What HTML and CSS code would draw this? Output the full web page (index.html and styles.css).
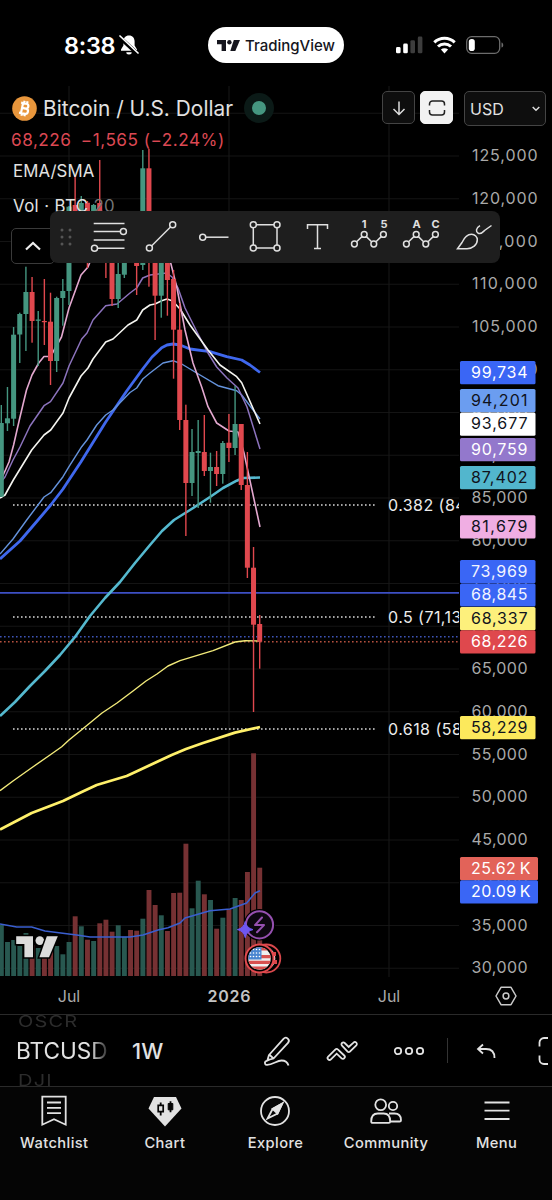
FILE: index.html
```html
<!DOCTYPE html>
<html lang="en">
<head>
    <meta charset="UTF-8">
    <meta name="viewport" content="width=device-width, initial-scale=1.0">
    <title>BTCUSD Chart</title>
    <link rel="stylesheet" href="styles.css">
</head>
<body>
    <!-- Status bar -->
    <header class="status-bar">
        <div class="clock">
            <span>8:38</span>
            <svg width="20" height="22" viewBox="0 0 20 22">
                <path d="M10 1.5c-3.6 0-5.6 2.6-5.6 6v4L2 15.5v1.3h16v-1.3l-2.4-4v-4c0-3.4-2-6-5.6-6z" fill="#fff"/>
                <path d="M7.3 18.2h5.4a2.7 2.2 0 0 1-5.4 0z" fill="#fff"/>
                <path d="M0 2.8l18.5 17" stroke="#000" stroke-width="4"/>
                <path d="M1 2l18 17" stroke="#fff" stroke-width="1.7" stroke-linecap="round"/>
            </svg>
        </div>
        <div class="brand">
            <svg width="23" height="11" viewBox="0 0 23 11" fill="#15151d">
                <path d="M0 0h9v11H4.6V4.3H0z"/>
                <circle cx="12.4" cy="2.2" r="2.2"/>
                <path d="M16.8 0H23l-4.7 11h-5z"/>
            </svg>
            <span>TradingView</span>
        </div>
        <div class="indicators">
            <svg width="27" height="18" viewBox="0 0 27 18">
                <rect x="0" y="11" width="4.6" height="6.3" rx="1.4" fill="#fff"/>
                <rect x="7.2" y="7.6" width="4.6" height="9.7" rx="1.4" fill="#fff"/>
                <rect x="14.4" y="4.2" width="4.6" height="13.1" rx="1.4" fill="#3d3d3d"/>
                <rect x="21.8" y="0.6" width="4.6" height="16.7" rx="1.4" fill="#3d3d3d"/>
            </svg>
            <svg width="23" height="18" viewBox="0 0 23 18" fill="none" stroke="#fff" stroke-width="3">
                <path d="M1.3 6.4a14.6 14.6 0 0 1 20.4 0"/>
                <path d="M5 10.5a9.4 9.4 0 0 1 13 0"/>
                <path d="M11.5 17.4l-3.6-3.8a5.3 5.3 0 0 1 7.2 0z" fill="#fff" stroke="none"/>
            </svg>
            <svg width="38" height="18" viewBox="0 0 38 18">
                <rect x="0.7" y="0.7" width="33" height="16.6" rx="5" fill="none" stroke="#6c6c6c" stroke-width="1.3"/>
                <rect x="2.8" y="3" width="6" height="12" rx="2.8" fill="#fff"/>
                <path d="M35.5 6.4c2.3.5 2.3 4.7 0 5.2z" fill="#6c6c6c"/>
            </svg>
        </div>
    </header>

    <!-- Chart -->
    <main class="chart">
        <svg id="plot" class="plot" width="552" height="928" viewBox="0 86 552 928">
            <defs>
                <clipPath id="pane"><rect x="0" y="86" width="459" height="891"/></clipPath>
                <clipPath id="flag"><circle cx="259.5" cy="958.5" r="11.2"/></clipPath>
            </defs>
            <g id="grid" clip-path="url(#pane)"></g>
            <g id="volume" clip-path="url(#pane)"></g>
            <g id="levels" clip-path="url(#pane)"></g>
            <g id="averages" clip-path="url(#pane)"></g>
            <g id="candles" clip-path="url(#pane)"></g>
            <g id="axis"></g>

            <!-- watermark -->
            <g fill="#dcdcdc" stroke="#000" stroke-width="3" paint-order="stroke">
                <path d="M16.2 936.2H33v21h-8.6v-13.3h-8.2z"/>
                <circle cx="39.8" cy="940.6" r="4.3"/>
                <path d="M46.8 936.2h11L49 957.2h-9.6z"/>
            </g>

            <!-- event badges -->
            <circle cx="259.5" cy="924.8" r="15.8" fill="#000"/>
            <circle cx="259.5" cy="924.8" r="13.6" fill="#0c0710" stroke="#9550b0" stroke-width="2"/>
            <path d="M262 917.5l-7 7.6h9l-7 7.2" fill="none" stroke="#9550b0" stroke-width="2" stroke-linejoin="round" stroke-linecap="round"/>
            <path d="M245.2 921.5Q246.6 928.2 253 929.6Q246.6 931 245.2 937.7Q243.8 931 237.4 929.6Q243.8 928.2 245.2 921.5z" fill="#6f57f2" stroke="#6f57f2" stroke-width="1" stroke-linejoin="round"/>
            <circle cx="266.3" cy="958.5" r="14" fill="#000" stroke="#d9484c" stroke-width="1.8"/>
            <circle cx="263.3" cy="958.5" r="12" fill="#e8e8e8"/>
            <path d="M270 952h6v4h-4zM270 960h7v4h-7z" fill="#d9484c"/>
            <circle cx="259.5" cy="958.5" r="14" fill="#000" stroke="#e2494e" stroke-width="2"/>
            <g clip-path="url(#flag)">
                <rect x="247" y="946" width="25" height="25" fill="#efefef"/>
                <path d="M247 949h25M247 956.6h25M247 962.3h25M247 968.2h25" stroke="#d8514f" stroke-width="3.2"/>
                <rect x="247" y="946" width="14.5" height="13.5" fill="#4a86d0"/>
                <g fill="#fff" id="stars"></g>
            </g>

            <!-- axis settings -->
            <path d="M501 987.3h10l5 8.7-5 8.7h-10l-5-8.7z" fill="none" stroke="#c9c9c9" stroke-width="1.5" stroke-linejoin="round"/>
            <circle cx="506" cy="996" r="2.9" fill="none" stroke="#c9c9c9" stroke-width="1.5"/>
        </svg>

        <!-- Legend -->
        <div class="legend">
            <div class="symbol-row">
                <svg width="25" height="25" viewBox="0 0 25 25">
                    <circle cx="12.5" cy="12.5" r="12.3" fill="#e8963c"/>
                    <g fill="none" stroke="#fff" stroke-width="2.2" transform="rotate(12 12.5 12.5)">
                        <path d="M8 7.5h5.4a2.4 2.4 0 0 1 0 4.9H10h3.9a2.6 2.6 0 0 1 0 5.2H8M10 7.5v10M11 4.8v2.5M14 4.8v2.5M11 17.5v2.7M14 17.5v2.7"/>
                    </g>
                </svg>
                <h1>Bitcoin / U.S. Dollar</h1>
                <span class="market-open"></span>
            </div>
            <div class="change">68,226 <span>−1,565 (−2.24%)</span></div>
            <div class="study">EMA/SMA</div>
            <div class="study vol">Vol · BTC <span>20</span></div>
            <button class="collapse" aria-label="Collapse legend">
                <svg width="18" height="12" viewBox="0 0 18 12"><path d="M2 9.5l7-6.5 7 6.5" fill="none" stroke="#eee" stroke-width="2.2"/></svg>
            </button>
        </div>

        <div class="chart-buttons">
            <button class="square" aria-label="Scroll down">
                <svg width="20" height="20" viewBox="0 0 20 20"><path d="M10 3.5v13M4.5 11l5.5 5.5 5.5-5.5" fill="none" stroke="#ddd" stroke-width="1.5"/></svg>
            </button>
            <button class="square light" aria-label="Fullscreen">
                <svg width="18" height="18" viewBox="0 0 18 18"><path d="M1.5 6.5V5a3 3 0 0 1 3-3h9a3 3 0 0 1 3 3v1.5M1.5 11V13a3 3 0 0 0 3 3h9a3 3 0 0 0 3-3V11" fill="none" stroke="#222" stroke-width="1.5"/></svg>
            </button>
            <button class="currency">
                <span>USD</span>
                <svg width="8" height="6" viewBox="0 0 8 6"><path d="M0.7 1l3.3 3.2L7.3 1" fill="none" stroke="#ddd" stroke-width="1.5"/></svg>
            </button>
        </div>

        <!-- Drawing tools -->
        <div class="drawing-tools">
            <svg class="grip" width="12" height="18" viewBox="0 0 12 18" fill="#555">
                <circle cx="2" cy="2" r="1.5"/><circle cx="10" cy="2" r="1.5"/>
                <circle cx="2" cy="9" r="1.5"/><circle cx="10" cy="9" r="1.5"/>
                <circle cx="2" cy="16" r="1.5"/><circle cx="10" cy="16" r="1.5"/>
            </svg>
            <svg class="tool" viewBox="-18 -18 36 36"><path d="M-15.3-13.5H15.5M-15.3-5.4H11.2M-15.3 3H15.5M-11 11.2H15.5"/><circle cx="14.4" cy="-5.4" r="3"/><circle cx="-14.5" cy="11.2" r="3"/></svg>
            <svg class="tool" viewBox="-18 -18 36 36"><path d="M-9.5 9l19-19"/><circle cx="-11.6" cy="11" r="3"/><circle cx="11.7" cy="-12.3" r="3"/></svg>
            <svg class="tool" viewBox="-18 -18 36 36"><path d="M-7.2 0.2H15.5"/><circle cx="-10.3" cy="0.2" r="3"/></svg>
            <svg class="tool" viewBox="-18 -18 36 36"><path d="M-8.7-12.3H9M-8.7 11H9M-11.7-9.3V8M12-9.3V8"/><circle cx="-11.7" cy="-12.3" r="3"/><circle cx="12" cy="-12.3" r="3"/><circle cx="-11.7" cy="11" r="3"/><circle cx="12" cy="11" r="3"/></svg>
            <svg class="tool" viewBox="-18 -18 36 36"><path d="M-9.5-8v-4.3H10.5V-8M0.5-12.3V11.5M-3 11.5h7"/></svg>
            <svg class="tool" viewBox="-18 -18 36 36"><path d="M-12.4 4.8l5.3-5.2M-2.6-0.4l5.2 5.2M7 4.8l5.2-5.2"/><circle cx="-14.6" cy="7" r="2.9"/><circle cx="-4.8" cy="-2.6" r="2.9"/><circle cx="4.8" cy="7" r="2.9"/><circle cx="14.4" cy="-2.6" r="2.9"/><text x="-5" y="-9.5">1</text><text x="15" y="-9.5">5</text></svg>
            <svg class="tool" viewBox="-18 -18 36 36"><path d="M-12.4 4.8l5.3-5.2M-2.6-0.4l5.2 5.2M7 4.8l5.2-5.2"/><circle cx="-14.6" cy="7" r="2.9"/><circle cx="-4.8" cy="-2.6" r="2.9"/><circle cx="4.8" cy="7" r="2.9"/><circle cx="14.4" cy="-2.6" r="2.9"/><text x="-4.5" y="-9.5">A</text><text x="14.5" y="-9.5">C</text></svg>
            <svg class="tool" viewBox="-18 -18 36 36"><path d="M-15.5 11.7L-11 5.5C-8.5 0-5-2.8-1.5-2.8C2-2.8 4.3 0 4.3 2.8C4.3 8-0.5 11.7-6 11.7zM7-11.3C2.7-8.8 2.5-5.5 5.3-3.7C8-2.5 9.5-4.5 11.5-6.5L18.5-11.5"/></svg>
        </div>
    </main>

    <!-- Chart toolbar -->
    <div class="toolbar">
        <div class="symbol-wheel">
            <span class="ghost">OSCR</span>
            <span class="current">BTCUSD</span>
            <span class="ghost">DJI</span>
        </div>
        <span class="interval">1W</span>
        <div class="toolbar-icons">
            <svg width="30" height="32" viewBox="0 0 30 32"><path d="M7 20L21.5 3.8a3 3 0 0 1 4.5 4L11.5 23.5L5.5 25zM7.2 19.5l4.3 4M7.8 24.4L3.5 26.5a2 2 0 0 0 1.6 3.4C11 29.5 15 25.5 19.5 25.5c3.5 0 6 1.5 7 5"/></svg>
            <svg width="34" height="22" viewBox="0 0 34 22"><path d="M2.2 16.6L9.5 9.3a1.6 1.6 0 0 1 2.3 0L18.2 15.5a1.8 1.8 0 0 1-2.6 2.8L10.7 13.7L4.9 19.4a1.9 1.9 0 0 1-2.7-2.8zM16 3a1.9 1.9 0 0 1 2.7 0L22.7 7L27.5 2.6a1.9 1.9 0 0 1 2.8 2.7L23.9 11.6a1.6 1.6 0 0 1-2.3 0L16 5.7a1.9 1.9 0 0 1 0-2.7z"/></svg>
            <svg width="32" height="10" viewBox="0 0 32 10"><circle cx="5" cy="5" r="3.2"/><circle cx="16" cy="5" r="3.2"/><circle cx="27" cy="5" r="3.2"/></svg>
            <i class="divider"></i>
            <svg width="20" height="16" viewBox="0 0 20 16"><path d="M7 1.5L2 6l5 4.5M2.5 6H10c5 0 8.5 3 8.5 9"/></svg>
            <svg class="cut" width="10" height="30" viewBox="0 0 10 30"><path d="M1.5 10.5V6.5a4.5 4.5 0 0 1 4.5-4.5h4M1.5 19.5v4a4.5 4.5 0 0 0 4.5 4.5h4"/></svg>
        </div>
    </div>

    <!-- Bottom tabs -->
    <nav class="tabs">
        <a class="tab">
            <svg width="34" height="32" viewBox="0 0 34 32"><path d="M5.3 1.7h23.4v28L17 24.3 5.3 29.7zM10 7.5h14M10 12.8h14M10 18.2h14"/></svg>
            <span>Watchlist</span>
        </a>
        <a class="tab">
            <svg width="34" height="32" viewBox="0 0 34 32"><path d="M6 2h22l5.5 11.5L17 31.5.5 13.5z" fill="#e2e2e2" stroke="none"/><path d="M12.7 7.5v2.5M12.7 17v3.5M22.5 6.2v11" stroke="#050505" stroke-width="1.8"/><path d="M10.2 10.3h5v6.4h-5z" stroke="#050505" stroke-width="1.7"/><path d="M20.2 8.5h4.6v6.3h-4.6z" fill="#050505" stroke="#050505" stroke-width="1"/></svg>
            <span>Chart</span>
        </a>
        <a class="tab">
            <svg width="34" height="32" viewBox="0 0 34 32"><circle cx="17" cy="16" r="14"/><path d="M24.3 8.5L14.6 14L9.6 23.5L19.5 18.5z"/><path d="M24.3 8.5L14.6 14L19.5 18.5z" fill="#e2e2e2"/></svg>
            <span>Explore</span>
        </a>
        <a class="tab">
            <svg width="34" height="32" viewBox="0 0 34 32"><circle cx="11.7" cy="9.8" r="5.4"/><circle cx="24" cy="11" r="4.2"/><path d="M2.2 26.5c0-5 2.5-8 6.5-8h6c4 0 6.5 3 6.5 8 0 .9-.5 1.3-1.4 1.3H3.6c-.9 0-1.4-.4-1.4-1.3zM20 18.5h5.5c4 0 6.500 2.500 6.500 6.700 0 .9-.5 1.300-1.400 1.300H21.200"/></svg>
            <span>Community</span>
        </a>
        <a class="tab">
            <svg width="34" height="32" viewBox="0 0 34 32"><path d="M4.5 7.5h25M4.5 15.7h25M4.5 24h25"/></svg>
            <span>Menu</span>
        </a>
    </nav>

    <script src="chart.js"></script>
</body>
</html>
```
FILE: styles.css
```css
* {
    box-sizing: border-box;
}
body {
    background-color: #000;
    color: #e2e2e2;
    font-family: Inter, "Liberation Sans", sans-serif;
    width: 552px;
    height: 1200px;
    margin: 0;
    overflow: hidden;
}
svg {
    display: block;
    flex: none;
}
button {
    font: inherit;
    color: inherit;
    padding: 0;
    display: flex;
    align-items: center;
    justify-content: center;
}

/* Status bar */
.status-bar {
    display: flex;
    height: 86px;
    padding: 27px 48px 23px 64px;
}
.clock {
    display: flex;
    align-items: center;
    gap: 4px;
    width: 144px;
    color: #fff;
    font-size: 23.5px;
    font-weight: 600;
    letter-spacing: -0.3px;
}
.brand {
    display: flex;
    align-items: center;
    gap: 5px;
    width: 136px;
    padding-left: 9px;
    border-radius: 18px;
    background-color: #fff;
    color: #15151d;
    font-size: 15px;
    font-weight: 500;
}
.indicators {
    display: flex;
    align-items: center;
    gap: 10px;
    margin-left: auto;
}

/* Chart */
.chart {
    position: relative;
    height: 928px;
}
.plot text {
    font-family: Inter, "Liberation Sans", sans-serif;
    font-size: 16px;
    fill: #a9a9a9;
}
.plot .fib {
    fill: #ececec;
}
.plot .date {
    text-anchor: middle;
}
.plot .year {
    font-weight: 600;
    fill: #c4c4c4;
}
.legend {
    position: absolute;
    left: 12px;
    top: 7px;
    display: flex;
    flex-direction: column;
    align-items: flex-start;
    white-space: nowrap;
}
.symbol-row {
    display: flex;
    align-items: center;
    height: 30px;
}
.symbol-row h1 {
    margin: 0 11px 0 6px;
    font-size: 20.8px;
    font-weight: 400;
    letter-spacing: 0.05px;
}
.market-open {
    width: 30px;
    height: 30px;
    border: 8px solid #0b1a17;
    border-radius: 50%;
    background-color: #459680;
}
.change {
    height: 33px;
    line-height: 33px;
    font-size: 17.2px;
    letter-spacing: 0.5px;
    margin-left: -1px;
    color: #dc4853;
}
.change span {
    margin-left: 4px;
}
.study {
    height: 35px;
    line-height: 30px;
    padding-left: 1px;
    font-size: 16.8px;
    letter-spacing: 0.1px;
}
.vol {
    letter-spacing: 0.4px;
}
.vol span {
    color: #777;
}
.collapse {
    width: 44px;
    height: 36px;
    margin: 2px 0 0 -1px;
    border: 1px solid #3a3a3a;
    border-radius: 5px;
    background-color: #000;
}
.chart-buttons {
    position: absolute;
    top: 5px;
    right: 6px;
    display: flex;
    align-items: flex-start;
    gap: 5px;
}
.square {
    width: 33px;
    height: 33px;
    border: 1px solid #444;
    border-radius: 5px;
    background-color: #0e0e0e;
}
.square.light {
    border-color: #f2f2f2;
    background-color: #f2f2f2;
}
.currency {
    width: 82px;
    height: 35px;
    margin-left: 6px;
    padding: 0 5px;
    justify-content: space-between;
    border: 1px solid #444;
    border-radius: 5px;
    background-color: #0e0e0e;
    font-size: 16px;
}
.drawing-tools {
    position: absolute;
    left: 50px;
    top: 125px;
    display: flex;
    align-items: center;
    width: 450px;
    height: 52px;
    border-radius: 8px;
    background-color: #1e1e1e;
}
.grip {
    margin: 0 18.5px 0 10px;
}
.tool {
    width: 36px;
    height: 36px;
    margin-right: 16.1px;
    overflow: visible;
    fill: none;
    stroke: #e0e0e0;
    stroke-width: 1.5;
}
.tool text {
    fill: #e0e0e0;
    stroke: none;
    font-size: 11px;
    font-weight: 700;
    text-anchor: middle;
}

/* Chart toolbar */
.toolbar {
    display: flex;
    align-items: center;
    height: 73px;
    padding-left: 16px;
    border-top: 1px solid #2a2a2a;
    border-bottom: 1px solid #2a2a2a;
}
.symbol-wheel {
    display: flex;
    flex-direction: column;
    justify-content: space-between;
    width: 93px;
    height: 71px;
    overflow: hidden;
    -webkit-mask-image: linear-gradient(to right, #000 80%, transparent 103%);
    mask-image: linear-gradient(to right, #000 80%, transparent 103%);
}
.ghost {
    height: 14px;
    line-height: 13px;
    padding-left: 2px;
    color: #2c2c2c;
    font-size: 20px;
    letter-spacing: 1.2px;
    transform: scaleY(0.8);
}
.current {
    font-size: 22.6px;
    line-height: 26px;
}
.ghost:last-child {
    line-height: 18px;
}
.interval {
    width: 130px;
    padding-left: 23px;
    font-size: 22px;
    font-weight: 500;
}
.toolbar-icons {
    display: flex;
    align-items: center;
    margin-left: 23px;
    fill: none;
    stroke: #e2e2e2;
    stroke-width: 1.8;
}
.toolbar-icons svg + svg {
    margin-left: 34px;
}
.toolbar-icons svg:nth-child(3) {
    margin-left: 33px;
}
.divider {
    width: 1px;
    height: 25px;
    margin: 0 28px 0 22px;
    background-color: #333;
}
.toolbar-icons .cut {
    margin-left: 42px;
}

/* Bottom tabs */
.tabs {
    display: flex;
    height: 113px;
    padding-top: 8px;
    background-color: #050505;
}
.tab {
    display: flex;
    flex: 1 1 0;
    flex-direction: column;
    align-items: center;
    gap: 7px;
    font-size: 14.7px;
    font-weight: 500;
    letter-spacing: 0.4px;
}
.tab:first-child {
    margin-left: -1px;
}
.tab svg {
    fill: none;
    stroke: #e2e2e2;
    stroke-width: 1.8;
}
```
FILE: chart.js
```js
var NS = 'http://www.w3.org/2000/svg';
var STEP = 6.152;
var FIRST = 1.3;
var GREEN = '#459680';
var RED = '#e0484e';

function add(parent, tag, attrs, text) {
    var el = document.createElementNS(NS, tag);
    for (var key in attrs) {
        el.setAttribute(key, attrs[key]);
    }
    if (text) {
        el.textContent = text;
    }
    document.getElementById(parent).appendChild(el);
}

// [direction, wick top, body top, body bottom, wick bottom, volume top]
var bars = [
    [1, 405, 423, 496.7, 497, 925], [1, 387, 418.3, 423.3, 431, 942], [1, 327, 334.7, 418.7, 426, 940],
    [1, 312.7, 314, 334.5, 363, 946], [1, 266.7, 292, 314, 351, 933], [0, 277, 292, 321, 342.7, 945],
    [1, 311, 319.5, 320.8, 366, 948], [0, 279, 321, 322.2, 345, 944], [0, 292.7, 321.7, 361, 385, 942],
    [1, 296.7, 298, 361, 372, 946], [1, 279, 291, 298, 325.7, 954.3], [1, 206, 206.7, 291, 305, 942],
    [0, 175, 205, 250, 255, 916.3], [1, 196, 203, 250, 255, 926.3], [0, 201, 202.7, 255, 268, 939.7],
    [1, 204, 205, 250, 255, 941], [0, 160, 203, 250, 255, 923.3], [0, 220, 230, 260, 278, 919.7],
    [0, 230, 240, 299, 306, 931.7], [1, 240, 274, 299, 308, 925.3], [1, 230, 240, 274.7, 278, 936.7],
    [0, 220, 230, 250, 255, 930], [0, 220, 240, 266, 295, 930.7], [1, 150, 168.3, 265, 270, 918.7],
    [0, 149, 168.3, 256, 286.7, 890], [0, 220, 230, 295.7, 340, 905], [1, 220, 230, 295.7, 317.7, 915.3],
    [0, 220, 230, 280, 315.7, 931], [0, 270, 279, 329.7, 378.7, 893], [0, 303, 329.7, 420, 430, 892.7],
    [0, 404.7, 420, 483, 536, 843.7], [1, 429, 452, 483, 496, 908.3], [1, 420, 451, 453, 508, 880.7],
    [0, 415, 452, 471, 476, 894.3], [1, 452.7, 467, 471, 502.7, 900], [0, 451, 467, 474, 486, 928.7],
    [1, 441, 443, 474, 483.7, 917.7], [0, 414, 442.7, 448, 462, 909.3], [1, 386, 424, 448, 455, 898],
    [0, 424, 424, 485, 490, 900], [0, 452, 485, 567.7, 578, 872], [0, 547, 567.7, 624.7, 712, 753.3],
    [0, 615, 624, 641.7, 668.7, 867.7]
];

// Grid
for (var n = -1; n < 20; n++) {
    var gy = 156 + n * 42.75;
    add('grid', 'path', { d: 'M0 ' + gy + 'H459', stroke: '#141414' });
    if (n >= 0) {
        var price = (125 - n * 5) + ',000';
        add('axis', 'text', { x: price.length > 6 ? 472 : 471.5, y: gy + 5.2, textLength: price.length > 6 ? 65.5 : 56 }, price);
    }
}
[69, 229, 389].forEach(function (x) {
    add('grid', 'path', { d: 'M' + x + ' 86V977', stroke: '#191919' });
});

// Volume and candles
bars.forEach(function (bar, i) {
    var x = FIRST + i * STEP;
    var color = bar[0] ? GREEN : RED;
    add('volume', 'rect', { x: x - 2.4, y: bar[5], width: 4.9, height: 976 - bar[5], fill: bar[0] ? '#285850' : '#763133' });
    add('candles', 'rect', { x: x - 0.7, y: bar[1], width: 1.4, height: bar[4] - bar[1], fill: color });
    add('candles', 'rect', { x: x - 2.5, y: bar[2], width: 5, height: bar[3] - bar[2], fill: color });
});

// Horizontal levels
[[505, '0.382 (84,123)'], [617, '0.5 (71,132)'], [729, '0.618 (58,141)']].forEach(function (fib) {
    add('levels', 'path', { d: 'M13 ' + fib[0] + 'H377', stroke: '#d8d8d8', 'stroke-width': 1.5, 'stroke-dasharray': '1.6 2.4' });
    add('levels', 'text', { x: 388, y: fib[0] + 6, 'class': 'fib', 'letter-spacing': 0.45 }, fib[1]);
});
add('levels', 'path', { d: 'M0 592.8H459', stroke: '#3d4fc4', 'stroke-width': 1.7 });
add('levels', 'path', { d: 'M0 636.8H459', stroke: '#3e55b8', 'stroke-width': 1.5, 'stroke-dasharray': '1.6 2.4' });
add('levels', 'path', { d: 'M0 641.8H459', stroke: '#b5503f', 'stroke-width': 1.5, 'stroke-dasharray': '1.6 2.4' });

// Moving averages: color, width, points
var averages = [
    ['#fff06a', 2.8, '0,829.5 13,822.7 31.7,813 50,806 63,801 81.7,792 96.7,785 126.7,776 138,770.7 171.7,755 186,749 203,743 235,732.7 260,727'],
    ['#f2ea7a', 1.4, '0,790.7 13,781 31.7,767.7 50,755 61.7,746.7 69,740 85,727 102,713 117,703 133,691 146,681 157,674 168,666 180,660.7 213,650.7 235,642 245,640.7 260,641'],
    ['#55b9cf', 2.6, '0,716 15,702 30,686 45,671 60,655 75,637 90,616 105,598 120,582 135,563 150,545 162,531 174,520 190,510 210,497 223,488 236.7,480.7 243,478 260,477.5'],
    ['#3f68ee', 2.8, '0,559 20,541 38,520 50.7,505 63,489 81,461.7 105.7,422 126.7,391 142.7,369 152,357 161.7,347.7 167,345 173,344 180,345 190,349 210,351.7 226.7,356.7 241.7,360 250,365 260,372.5'],
    ['#6593dc', 1.4, '0,554 13,539 26.7,520 44,497 50.7,492.7 63,476.7 69,466.7 81.7,446.7 87,440 96.7,425 105.7,415 113,410 130,392.5 136.7,388 142.7,379 150,373 163,363 173,360.7 181.7,364 196.7,373 218,385.7 236.7,390.7 241.7,395 250,406 260,419'],
    ['#8c73bd', 1.5, '0,483 5,477 13,460 20,447 30,426 44,405.7 50.5,401.7 63,383 69,366 81.7,339 87,333 93,320 105.7,305.7 117,304 130,293 136.7,288 142.7,278 150,275 166.7,273 172,277 178,288 185,308 197,332 208,353 216.7,367 227,378 238,388 247,407 260,449'],
    ['#f5f5f0', 1.6, '0,498 5,495 13.3,480 31.7,450 44,435 50.7,430 63,413 69,398 81,376 88,368 93,359 105.7,342 113,339 128,325 136.7,320 142.7,310 150,305 155,304 161.7,300.7 167,299 172.7,301 180,309 190,325 208,350 220,365 236.7,376.7 241.7,382.7 260,424'],
    ['#e3a8cf', 1.6, '0,482 5,471 9,462 13.6,445 20,417 26.5,390 32,375 38.7,363 44,356.5 50.5,356.5 61.5,337 69,308 81,275 88,267 92,257 110,235 155,235 170.7,263 176.7,286.7 185,330 193,363 201.7,387 208,406.7 216.7,423 229,431 238,432 244,453 260,527'],
    ['#3a5fd0', 1.5, '0,924 16.7,927 31.7,927 45,931 76.7,935 90,937 130,937 143,935 158,930 168,927.7 180,923 185,918 210,910.7 230,909 246.7,903 255,893 260,890.7']
];
averages.forEach(function (ma) {
    add('averages', 'polyline', { points: ma[2], fill: 'none', stroke: ma[0], 'stroke-width': ma[1], 'stroke-linejoin': 'round' });
});

// Price tags: top, background, text color, value, width
[
    [361, '#3a66f5', '#fff', '99,734', 75.5],
    [389, '#6b9df0', '#10131c', '94,201', 75.5],
    [412.5, '#fff', '#10131c', '93,677', 75.5],
    [438, '#9378cc', '#fff', '90,759', 75.5],
    [466, '#52b6cd', '#10131c', '87,402', 75.5],
    [515.3, '#f0aee3', '#10131c', '81,679', 75.5],
    [560, '#3a66f5', '#f2f4ff', '73,969', 75.5],
    [583.4, '#3a66f5', '#f2f4ff', '68,845', 75.5],
    [607, '#fdf07c', '#10131c', '68,337', 75.5],
    [630.2, '#df484d', '#fff', '68,226', 75.5],
    [716, '#fce95c', '#10131c', '58,229', 75.5],
    [857, '#e26359', '#fff', '25.62\u2009K', 78],
    [880.3, '#3a66f5', '#fff', '20.09\u2009K', 78]
].forEach(function (tag) {
    add('axis', 'rect', { x: 460, y: tag[0], width: tag[4], height: 23.2, rx: 1.5, fill: tag[1] });
    add('axis', 'text', { x: 471, y: tag[0] + 16.7, textLength: tag[4] > 76 ? 59.5 : 56.5, style: 'fill:' + tag[2] }, tag[3]);
});

// Dates
add('axis', 'text', { x: 69, y: 1002, 'class': 'date' }, 'Jul');
add('axis', 'text', { x: 229, y: 1002, 'class': 'date year', textLength: 43 }, '2026');
add('axis', 'text', { x: 389, y: 1002, 'class': 'date' }, 'Jul');

// Flag stars
for (var s = 0; s < 12; s++) {
    add('stars', 'circle', { cx: 250.5 + (s % 4) * 3, cy: 949.5 + Math.floor(s / 4) * 3.5, r: 0.8 });
}
```
